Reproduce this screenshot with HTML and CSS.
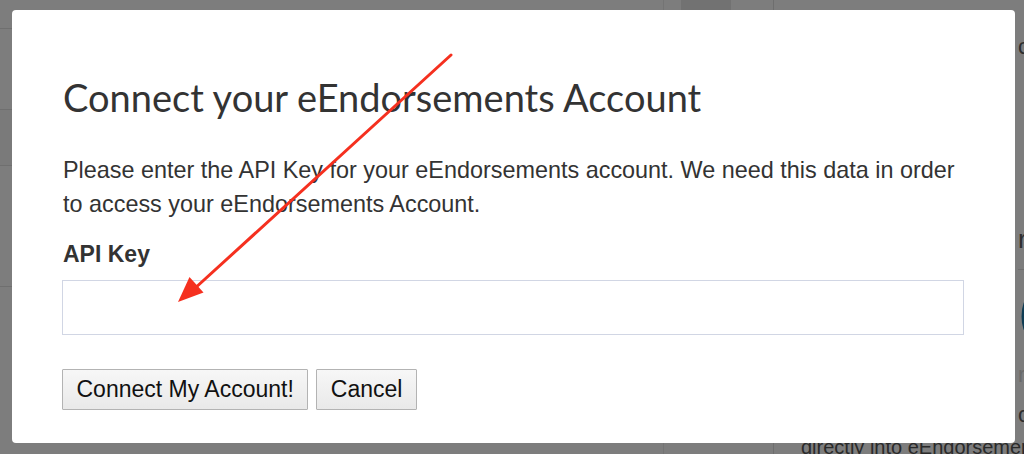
FILE: index.html
```html
<!DOCTYPE html>
<html lang="en">
<head>
<meta charset="utf-8">
<title>Connect your eEndorsements Account</title>
<link rel="stylesheet" href="styles.css">
</head>
<body>
<div class="page">
  <div class="col-left">
    <div class="row r1"></div>
    <div class="row r2"></div>
    <div class="row r3"></div>
    <div class="row r4"></div>
  </div>
  <div class="col-mid">
    <div class="tab"></div>
  </div>
  <div class="col-right">
    <div class="side">
      <div class="s1">connect</div>
      <div class="s2">recent</div>
      <div class="logo">C</div>
      <div class="s3">r</div>
      <div class="s4">or</div>
    </div>
    <div class="bottom-text">directly into eEndorsements</div>
  </div>
</div>

<div class="modal">
  <h1 class="title">Connect your eEndorsements Account</h1>
  <p class="desc">Please enter the API Key for your eEndorsements account. We need this data in order to access your eEndorsements Account.</p>
  <label class="label" for="apikey">API Key</label>
  <input class="input" id="apikey" type="text">
  <div class="actions">
    <button class="btn" type="button">Connect My Account!</button>
    <button class="btn" type="button">Cancel</button>
  </div>
</div>

<svg class="arrow" width="1024" height="454" viewBox="0 0 1024 454">
  <line x1="451" y1="55" x2="193" y2="290" stroke="#f5301f" stroke-width="3" stroke-linecap="round"/>
  <polygon points="178,302 189.5,277 203.5,292.5" fill="#f5301f"/>
</svg>
</body>
</html>
```
FILE: styles.css
```css
html, body {
  margin: 0;
  padding: 0;
  width: 1024px;
  height: 454px;
  overflow: hidden;
}
body {
  position: relative;
  background: #7c7c7c;
  font-family: "Liberation Sans", Arial, sans-serif;
}

/* dimmed page underneath */
.page {
  display: flex;
  height: 454px;
  background: #7d7d7d;
  overflow: hidden;
}
.col-left {
  width: 663px;
  border-right: 1px solid #747474;
}
.row {
  border-bottom: 1px solid #6f6f6f;
}
.r1 { height: 28px; }
.r2 { height: 80px; }
.r3 { height: 55px; background: #7a7a7a; }
.r4 { height: 120px; }
.col-mid {
  width: 109px;
  padding-left: 17px;
  box-sizing: border-box;
}
.tab {
  width: 50px;
  height: 12px;
  background: #727272;
}
.col-right {
  flex: 1;
  border-left: 1px solid #6e6e6e;
  display: flex;
  flex-direction: column;
  white-space: nowrap;
  overflow: hidden;
}
.side {
  padding-left: 244px;
  flex: 1;
  font-size: 22px;
  color: #2e2e2e;
}
.s1 { margin-top: 34px; }
.s2 {
  margin-top: 164px;
  font-size: 26px;
  padding-bottom: 14px;
  border-bottom: 1px solid #6f6f6f;
}
.logo {
  margin-top: 6px;
  font-size: 86px;
  line-height: 80px;
  color: #0e3c54;
  font-weight: bold;
}
.s3 { color: #6a6a6a; font-size: 22px; margin-top: 6px; }
.s4 { margin-top: 14px; font-size: 22px; }
.bottom-text {
  padding-left: 27px;
  height: 12px;
  font-size: 20px;
  line-height: 10px;
  color: #2a2a2a;
}

/* modal */
.modal {
  position: absolute;
  left: 12px;
  top: 10px;
  width: 1003px;
  height: 433px;
  box-sizing: border-box;
  background: #ffffff;
  border-radius: 4px;
  padding: 65px 51px 0 50px;
  display: flex;
  flex-direction: column;
  align-items: flex-start;
}
.title {
  margin: 0 0 0 1px;
  font-family: "Lato", "Open Sans", sans-serif;
  font-weight: 400;
  font-size: 38px;
  line-height: 44px;
  color: #333333;
}
.desc {
  margin: 34px 0 0 1px;
  font-size: 23.4px;
  line-height: 34px;
  color: #333333;
}
.label {
  margin: 20px 0 0 1px;
  font-size: 23px;
  line-height: 26px;
  font-weight: bold;
  color: #333333;
}
.input {
  margin-top: 13px;
  width: 902px;
  height: 55px;
  box-sizing: border-box;
  border: 1px solid #d1d6e4;
  background: #ffffff;
  padding: 0 10px;
  font-size: 18px;
  outline: none;
}
.actions {
  margin-top: 34px;
  display: flex;
  gap: 8px;
}
.btn {
  height: 41px;
  box-sizing: border-box;
  padding: 0 13.5px;
  border: 1px solid #b3b3b3;
  border-radius: 1px;
  background: linear-gradient(#f7f7f7, #e9e9e9);
  font-family: "Liberation Sans", Arial, sans-serif;
  font-size: 23px;
  color: #111111;
}

.arrow {
  position: absolute;
  left: 0;
  top: 0;
  pointer-events: none;
}
```
